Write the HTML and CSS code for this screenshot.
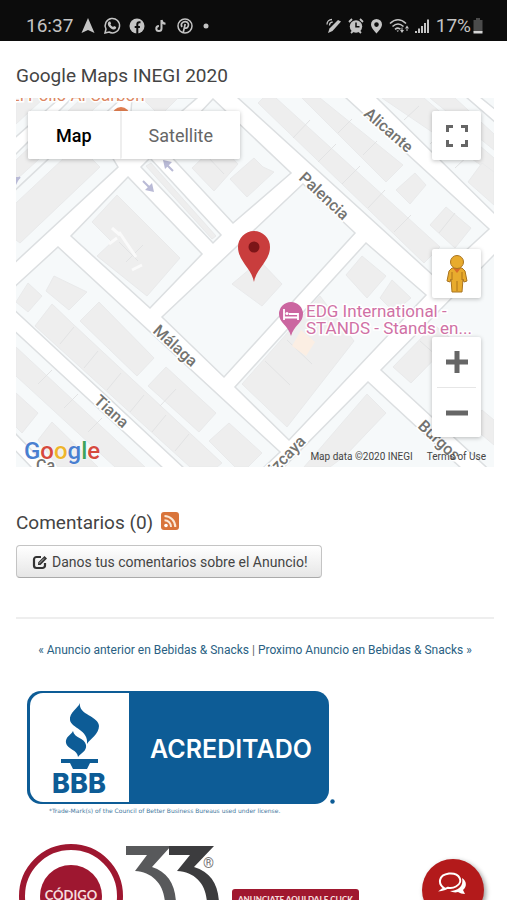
FILE: index.html
```html
<!DOCTYPE html>
<html lang="es">
<head>
<meta charset="utf-8">
<meta name="viewport" content="width=device-width, initial-scale=1">
<title>Anuncio</title>
<link rel="stylesheet" href="styles.css">
</head>
<body>
<header class="status">
  <div class="status-left">
    <span class="clock">16:37</span>
    <svg width="14" height="16" viewBox="0 0 14 16"><path fill="currentColor" d="M7 0l6.500 15L7 12 .5 15z"/></svg>
    <svg width="18" height="18" viewBox="0 0 18 18"><path d="M2 16l1-4a7.200 7.200 0 1 1 3 3z" fill="none" stroke="currentColor" stroke-width="1.500"/><path fill="currentColor" d="M6 4.500h1.200l.9 2.100-.7 1c.6 1.200 1.500 2 2.700 2.500l.9-1 2.200 1c0 2-1.500 2.600-2.700 2.400C7.500 12 5 9 4.800 7c0-1 .5-2 1.200-2.500z"/></svg>
    <svg width="16" height="16" viewBox="0 0 16 16"><circle cx="8" cy="8" r="7.500" fill="currentColor"/><path d="M11.500 4.300H10.300C9 4.300 8.300 5 8.300 6.300V16M5.700 9h5.200" fill="none" stroke="#0c0c0c" stroke-width="2"/></svg>
    <svg width="16" height="16" viewBox="0 0 16 16"><path d="M8.500 2v8.500a2.600 2.600 0 1 1-2.600-2.600M8.500 2c.3 2.300 1.700 3.500 4 3.700" fill="none" stroke="currentColor" stroke-width="2"/></svg>
    <svg width="16" height="16" viewBox="0 0 16 16"><circle cx="8" cy="8" r="7" fill="none" stroke="currentColor" stroke-width="1.500"/><path d="M6.200 14.500L8.200 6M5 9C3 5.500 6 3.500 8.500 3.700c3 .3 3.500 3 2.500 5-1 2-3 1.800-3.600.6" fill="none" stroke="currentColor" stroke-width="1.700"/></svg>
    <svg class="dot" width="6" height="16" viewBox="0 0 6 16"><circle cx="3" cy="8" r="2.500" fill="currentColor"/></svg>
  </div>
  <div class="status-right">
    <svg width="16" height="16" viewBox="0 0 16 16"><path d="M2 15l1.500-4.500L12 2l3 1.500L6.500 13z" fill="currentColor"/><path d="M1 6.500c0-3 2-5 5-5M3.500 7.500c0-2 1.200-3.300 3.200-3.500" fill="none" stroke="currentColor" stroke-width="1.300"/></svg>
    <svg width="16" height="16" viewBox="0 0 16 16"><circle cx="8" cy="8.500" r="6.200" fill="currentColor"/><path d="M1 4l3-3M12 1l3 3M3 15l2-2M13 15l-2-2" stroke="currentColor" stroke-width="1.800"/><path d="M8 4.500v4.300h3.500" fill="none" stroke="#0c0c0c" stroke-width="1.500"/></svg>
    <svg width="13" height="16" viewBox="0 0 13 16"><path fill="currentColor" fill-rule="evenodd" d="M6.500 1a5.500 5.500 0 0 1 5.500 5.500C12 10 6.500 15.500 6.500 15.500S1 10 1 6.500A5.500 5.500 0 0 1 6.500 1zm0 3.300a2.300 2.300 0 1 0 0 4.600 2.300 2.300 0 0 0 0-4.600z"/></svg>
    <svg width="20" height="16" viewBox="0 0 20 16"><path d="M1 5.500q8-7.500 16 0M3.500 8.500q5.500-5 11 0M6 11.300q3-2.500 5.500 0" fill="none" stroke="currentColor" stroke-width="1.600"/><path fill="currentColor" d="M11 12h4l-2 3zM16 10.500h4l-2-3zM12.500 9.500h1v3h-1zM17.500 10h1v3h-1zM7.500 12.500h2.500L8.800 14z"/></svg>
    <svg width="15" height="16" viewBox="0 0 15 16"><path fill="currentColor" d="M0 13h2v2H0zM3 10.500h2V15H3zM6 8h2v7H6zM9 5h2v10H9zM12 1.500h2V15h-2z"/></svg>
    <span class="battery-level">17%</span>
    <svg width="10" height="16" viewBox="0 0 10 16"><path fill="#4b4b4b" d="M3 0h4v2h2.500v12H.5V2H3z"/><path fill="#d5d5d5" d="M.5 13h9v2.500h-9z"/></svg>
  </div>
</header>

<main class="content">
  <h2 class="heading">Google Maps INEGI 2020</h2>

  <section class="map" aria-label="Mapa">
    <svg class="map-canvas" viewBox="16 98 478 369" preserveAspectRatio="xMidYMid slice">
      <rect x="16" y="98" width="478" height="369" fill="#fff"/>
      <g class="block">
        <path d="M10 98H60L10 142zM72 98H122L10 200V160z"/>
        <path d="M10 195L90 120 118 167 10 267z"/>
        <path d="M132 98H197L160 130 130 125z"/>
        <path d="M128 177L202 254 150 308 71 236z"/>
        <path d="M141 167L150 158 221 235 213 243z"/>
        <path d="M213 99L291 173 233 223 165 150z"/>
        <path d="M237 97H345L489 229 436 278z"/>
        <path d="M376 97H466L496 123V215z"/>
        <path d="M480 97H496V110z"/>
        <path d="M303 184L355 233 224 377 162 317z"/>
        <path d="M366 243L426 295 289 440 235 387z"/>
        <path d="M496 253L381 370 496 476z"/>
        <path d="M368 382L462 469H282z"/>
        <path d="M58 247L280 452 262 469H185L10 306V291z"/>
        <path d="M10 327L164 469H50L10 428z"/>
        <path d="M10 445L33 469H10z"/>
      </g>
      <g class="building">
        <path d="M16 104L24 98H44L16 124zM82 98H106L16 180V160z"/>
        <path d="M16 203L64 158 85 152 100 167 20 243 16 240z"/>
        <path d="M142 98H178L160 116z"/>
        <path d="M117 195L180 258 147 296 97 256 112 242 92 222z"/>
        <path d="M146 166L151 163 216 236 212 239z"/>
        <path d="M192 168L218 143 238 164 214 191zM230 179L254 158 263 167 274 172 247 197z"/>
        <path d="M258 103L263 98H276L440 247 424 263z"/>
        <path d="M302 98H320L403 165 386 182z"/>
        <path d="M415 173L426 185 410 204 396 190z"/>
        <path d="M446 207L471 228 455 248 430 225z"/>
        <path d="M382 98H424L494 158V174zM430 98H455L494 134V150z"/>
        <path d="M482 163L494 172V205L468 182z"/>
        <path d="M251 268L260 261 282 284 262 306 232 284z"/>
        <path d="M362 256L386 276 367 298 346 275zM392 280L411 298 394 312 380 298z"/>
        <path d="M320 296L354 341 287 427 242 384z"/>
        <path d="M434 325L453 340 411 383 393 367z"/>
        <path d="M367 394L386 413 346 455 330 467H304z"/>
        <path d="M54 276L87 292 69 310 46 291z"/>
        <path d="M28 283L42 296 28 312 16 302z"/>
        <path d="M99 302L154 358 137 376 80 321z"/>
        <path d="M52 304L74 325 222 463 217 467H190L35 326z"/>
        <path d="M166 367L216 413 199 432 148 386z"/>
        <path d="M229 423L262 453 248 467H235L209 441z"/>
        <path d="M16 347L145 467H115L16 376zM16 393L38 413 22 433 16 427zM52 422L98 467H58L38 440z"/>
        <path d="M482 410L494 420V445L470 425z"/>
      </g>
      <path class="seam" d="M60 344l14-17M84 368l14-17M107 390l14-17M130 412l14-17M152 432l14-17M175 451l14-17M160 406l16-17M293 138l17-18M318 162l18-18M342 184l18-18M368 208l17-18M394 232l17-17M338 133l14-14M363 155l14-14M404 120l15-14M430 144l15-14M455 168l15-14M287 340l25 24M265 361l25 24M420 341l17 15M119 242l19 19M38 384l14-14M64 408l14-14M88 432l14-14M126 262l17-17M206 155l18 19M455 213l-16 20"/>
      <path d="M112 228l8 7M119 232l17 25M117 238l-8 6M132 270l10-5" fill="none" stroke="#fafafa" stroke-width="3"/>
      <path d="M301 330l14 12-9 14-14-10z" fill="#fbeee3"/>
      <g class="arrows">
        <path class="shaft" d="M143 181l6 6M173 171l-6-6M20 177l-3 3"/>
        <path d="M154 192l-9-2 7-7zM163 160l9 2-7 7zM16 185v-8l4 0z"/>
      </g>
      <circle cx="121" cy="116" r="9" fill="#e37f50"/>
      <g class="streets">
        <text transform="translate(363 115) rotate(41)">Alicante</text>
        <text transform="translate(298 179) rotate(43)">Palencia</text>
        <text transform="translate(152 332) rotate(42)">Málaga</text>
        <text transform="translate(93 402) rotate(42)">Tiana</text>
        <text transform="translate(268 482) rotate(-46)">Vizcaya</text>
        <text transform="translate(417 427) rotate(43)">Burgos</text>
        <text x="36" y="471">Ca</text>
      </g>
      <text class="poi-food" x="10" y="101">El Pollo Al Carbón</text>
      <path d="M254 282c-2-13-16-21-16-35a16 16 0 0 1 32 0c0 14-14 22-16 35z" fill="#c93d3d"/>
      <circle cx="254" cy="247" r="5.500" fill="#7c1518"/>
      <path d="M291 336c-3-11-12-13-12-22a12 12 0 0 1 24 0c0 9-9 11-12 22z" fill="#cb66a0"/>
      <path d="M284 309v11M284 317.500h14v2.500M289 314h9v3" stroke="#fff" stroke-width="1.800" fill="none"/><circle cx="287" cy="313.500" r="1.600" fill="#fff"/>
      <g class="poi-hotel"><text x="306" y="317">EDG International -</text><text x="306" y="334">STANDS - Stands en...</text></g>
    </svg>

    <div class="map-types">
      <button class="map-type map-type-on" type="button">Map</button>
      <button class="map-type" type="button">Satellite</button>
    </div>
    <div class="map-side">
      <button class="tile" type="button" aria-label="Pantalla completa">
        <svg width="24" height="24" viewBox="0 0 24 24"><path d="M2.500 8V2.500H8M16 2.500h5.500V8M21.500 16v5.500H16M8 21.500H2.500V16" fill="none" stroke="#666" stroke-width="3"/></svg>
      </button>
      <div class="map-side-low">
        <button class="tile" type="button" aria-label="Street View">
          <svg width="24" height="40" viewBox="0 0 24 40"><path d="M7 14h10l3 3 2 10-3 1-1-3-1 13H7L6 25l-1 3-3-1 2-10z" fill="#e8ab2d" stroke="#a97420"/><path d="M8 14l4 5 4-5z" fill="#d96c28"/><path d="M12 27v10M7 18v8M17 18v8" stroke="#ad751d"/><circle cx="12" cy="8" r="6.500" fill="#e8ab2d" stroke="#a97420"/></svg>
        </button>
        <div class="zoom">
          <button class="zoom-key" type="button" aria-label="Acercar"><svg width="22" height="22" viewBox="0 0 22 22"><path d="M11 0v22M0 11h22" stroke="#666" stroke-width="5"/></svg></button>
          <button class="zoom-key" type="button" aria-label="Alejar"><svg width="22" height="22" viewBox="0 0 22 22"><path d="M0 11h22" stroke="#666" stroke-width="5"/></svg></button>
        </div>
      </div>
    </div>
    <div class="map-foot">
      <a class="google" href="#"><span class="b">G</span><span class="r">o</span><span class="y">o</span><span class="b">g</span><span class="g">l</span><span class="r">e</span></a>
      <span class="legal"><span>Map data ©2020 INEGI</span><a href="#">Terms of Use</a></span>
    </div>
  </section>

  <h2 class="heading comments">Comentarios (0)
    <a href="#" aria-label="RSS"><svg width="18" height="18" viewBox="0 0 18 18"><rect width="18" height="18" rx="3" fill="#d9743a"/><circle cx="5" cy="13.500" r="1.800" fill="#fff"/><path d="M3.500 8.200a6.500 6.500 0 0 1 6.500 6.800M3.500 4A11 11 0 0 1 14.300 15" fill="none" stroke="#fbe9d8" stroke-width="2"/></svg></a>
  </h2>
  <button class="comment-btn" type="button">
    <svg width="16" height="16" viewBox="0 0 16 16"><path d="M9 3H4.500A2.500 2.500 0 0 0 2 5.500v6A2.500 2.500 0 0 0 4.500 14h6a2.500 2.500 0 0 0 2.500-2.500V9" fill="none" stroke="#333" stroke-width="2.200"/><path d="M6 11V8.500L12.500 2 15 4.500 8.500 11z" fill="#333"/><path d="M7 9.500l5-5" stroke="#eee" stroke-width=".7"/></svg>
    Danos tus comentarios sobre el Anuncio!
  </button>

  <hr class="rule">
  <nav class="pager"><a href="#">« Anuncio anterior en Bebidas &amp; Snacks</a> | <a href="#">Proximo Anuncio en Bebidas &amp; Snacks »</a></nav>

  <a class="bbb" href="#">
    <svg width="310" height="128" viewBox="26 690 310 128">
      <rect x="27" y="691" width="302" height="113" rx="14" fill="#0d5c96"/>
      <path d="M43 693h86v109H43a13 13 0 0 1-13-13v-83a13 13 0 0 1 13-13z" fill="#fff"/>
      <path d="M80 703c-2 5-11 10-10 17 1 8 19 10 17 24 3-5 12-10 12-18 0-10-21-11-19-23z" fill="#0d5c96"/>
      <path d="M73 731c-2 4-8 6-7 12 1 6 12 7 12 14 3-4 9-6 8-12-1-7-12-7-13-14z" fill="#0d5c96"/>
      <path d="M61 759h37v4h-8l-3 6H73l-3-6h-9z" fill="#0d5c96"/>
      <text class="bbb-name" x="79" y="793">BBB</text>
      <text class="bbb-word" x="231" y="758">ACREDITADO</text>
      <circle cx="332.500" cy="801.500" r="2.200" fill="#0d5c96"/>
      <text class="bbb-note" x="49" y="813">*Trade-Mark(s) of the Council of Better Business Bureaus used under license.</text>
    </svg>
  </a>

  <div class="sponsors">
    <svg width="205" height="104" viewBox="19 843 205 104">
      <circle cx="71" cy="896" r="49" fill="#fff" stroke="#9e1730" stroke-width="6"/>
      <circle cx="71" cy="896" r="31" fill="#9e1730"/>
      <text class="seal" x="71" y="900">CÓDIGO</text>
      <path d="M126 846H171L152 867C168 872 176 885 176 905H165C165 885 153 872 135 871L147 855H126z" fill="#58595b"/>
      <path d="M169 846H214L194 867C211 872 219 885 219 905H207C207 885 196 872 177 871L190 855H169z" fill="#3c3c3e"/>
      <text class="reg" x="203" y="868">®</text>
    </svg>
    <a class="promo" href="#">ANUNCIATE AQUI DALE CLICK</a>
  </div>
</main>

<button class="chat" type="button" aria-label="Chat">
  <svg width="30" height="24" viewBox="0 0 30 24"><path d="M24 6c5 3 5 9 1 12l2 4c-3 0-5-1-7-2-3 1-6 0-8-1 8 0 14-5 12-13z" fill="#fff"/><path d="M6 16c-6-4-6-13 5-14.500C22 .5 26 10 18 14.500c-3 1.700-6 1.600-8 1.200-2 1.300-4 2-6.500 2.300z" fill="#b31a1b" stroke="#fff" stroke-width="2"/></svg>
</button>
</body>
</html>
```
FILE: styles.css
```css
* { box-sizing: border-box; }

body {
  margin: 0;
  height: 100vh;
  overflow: hidden;
  background: #fff;
  color: #444;
  font-family: Roboto, sans-serif;
}

button { font-family: inherit; border: 0; padding: 0; background: #fff; }
a { color: inherit; text-decoration: none; }
svg { display: block; flex: none; }

.status {
  display: flex;
  justify-content: space-between;
  align-items: center;
  padding: 10px 24px 0 26px;
  height: 41px;
  background: #0c0c0c;
  color: #c4c4c4;
  font-size: 19px;
}
.status-left, .status-right { display: flex; align-items: center; }
.status-left { gap: 8px; }
.status-right { gap: 6px; }
.battery-level { margin-right: -4px; }
.dot { margin-left: 2px; }

.content { padding: 24px 13px 0 16px; }

.heading { margin: 0; font-size: 19px; line-height: 22px; font-weight: 400; }

.map { position: relative; margin-top: 11px; overflow: hidden; }
.map-canvas { width: 100%; height: auto; }

.block { fill: #f6f9fa; stroke: #dcdfe1; stroke-width: 1.5; }
.building { fill: #eee; stroke: #e9eaeb; }
.seam { fill: none; stroke: #e2e3e4; }
.arrows { fill: #b9bad6; }
.shaft { stroke: #b9bad6; stroke-width: 2; }
.streets text, .poi-food, .poi-hotel text { paint-order: stroke; stroke: #fff; stroke-width: 3; }
.streets { font-size: 16px; font-weight: 500; fill: #737370; }
.poi-food { font-size: 17px; fill: #dc8763; }
.poi-hotel { font-size: 17px; fill: #d071a5; }

.map-types, .tile, .zoom { box-shadow: 0 1px 4px rgba(0, 0, 0, .25); border-radius: 2px; }
.map-types { position: absolute; left: 12px; top: 13px; display: flex; background: #fff; }
.map-type { height: 48px; padding: 0 27px; font-size: 18px; color: #666; border-radius: 2px; }
.map-type-on { color: #000; font-weight: 500; padding: 0 28px; border-right: 2px solid #eee; }

.map-side {
  position: absolute;
  right: 13px;
  top: 13px;
  bottom: 30px;
  display: flex;
  flex-direction: column;
  justify-content: space-between;
}
.map-side-low { display: grid; gap: 39px; }
.tile { display: grid; place-items: center; width: 49px; height: 49px; }
.zoom { display: grid; background: #fff; padding: 0 5px; }
.zoom-key { display: grid; place-items: center; height: 50px; }
.zoom-key + .zoom-key { border-top: 1px solid #e6e6e6; }

.map-foot {
  position: absolute;
  left: 8px;
  right: 8px;
  bottom: 0;
  display: flex;
  justify-content: space-between;
  align-items: flex-end;
}
.google { font-size: 24px; line-height: 32px; font-weight: 500; text-shadow: 0 0 2px #fff; }
.b { color: #4a7fd0; }
.r { color: #d6493e; }
.y { color: #eeb52c; }
.g { color: #3fa35a; }
.legal { display: flex; gap: 14px; font-size: 10px; line-height: 20px; color: #444; }

.comments { display: flex; align-items: center; gap: 8px; margin-top: 45px; }
.comments a { margin-top: -4px; }

.comment-btn {
  display: flex;
  align-items: center;
  gap: 4px;
  margin-top: 11px;
  padding: 0 13px 0 15px;
  height: 33px;
  border: 1px solid #c4c4c4;
  border-bottom-color: #aaa;
  border-radius: 4px;
  background: linear-gradient(#fff, #e6e6e6);
  color: #444;
  font-size: 14px;
}

.rule { margin: 39px 0 0; border: 0; border-top: 2px solid #eee; }

.pager { margin-top: 23px; text-align: center; font-size: 12px; line-height: 16px; color: #666; }
.pager a { color: #2a5f83; }

.bbb { display: block; margin: 32px 0 0 10px; }
.bbb-name { font: 800 27px Inter, sans-serif; fill: #0d5c96; text-anchor: middle; }
.bbb-word { font: 600 25px Inter, sans-serif; fill: #fff; text-anchor: middle; }
.bbb-note { font: 6px "DejaVu Sans", sans-serif; fill: #46799e; }

.sponsors { display: flex; align-items: flex-start; gap: 8px; margin: 25px 0 0 3px; }
.seal { font: 700 13px Lato, sans-serif; fill: #f5dcdc; text-anchor: middle; }
.reg { font-size: 14px; fill: #777; }
.promo {
  margin-top: 46px;
  padding: 4px 6px;
  border-radius: 3px;
  background: #a0182f;
  color: #f5dcdc;
  font: 900 8px/12px Lato, sans-serif;
}

.chat {
  position: fixed;
  right: 23px;
  bottom: -21px;
  display: grid;
  justify-items: center;
  align-content: start;
  padding-top: 13px;
  width: 62px;
  height: 62px;
  border-radius: 50%;
  background: #b31a1b;
  box-shadow: 2px 2px 5px rgba(0, 0, 0, .4);
}
```
